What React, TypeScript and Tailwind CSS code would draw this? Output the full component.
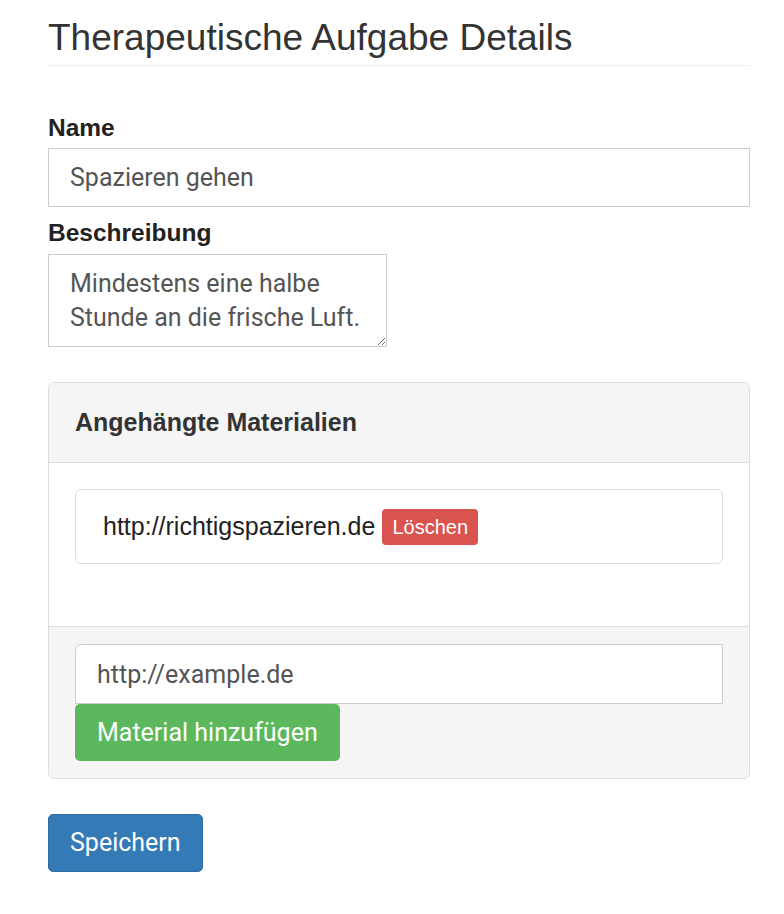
import { useState } from 'react';

const sans = "font-['Liberation_Sans',Arial,sans-serif]";
const roboto = "font-['Roboto',sans-serif]";

export default function App() {
  const [name, setName] = useState('Spazieren gehen');
  const [desc, setDesc] = useState('Mindestens eine halbe Stunde an die frische Luft.');
  const [url, setUrl] = useState('http://example.de');

  return (
    <div className={`${sans} text-[#333] bg-white min-h-screen`}>
      <div className="ml-[48px] w-[702px] pt-[17px]">
        <h1 className="text-[37px] leading-[41px] pb-[7px] border-b border-[#eee]">
          Therapeutische Aufgabe Details
        </h1>

        <div className="mt-[47px]">
          <label className="block font-bold text-[24.5px] leading-[30px] mb-[5px] text-[#222]">
            Name
          </label>
          <input
            value={name}
            onChange={(e) => setName(e.target.value)}
            className={`${roboto} block w-full h-[59px] px-[21px] text-[25px] text-[#555] border border-[#ccc] outline-none`}
          />
        </div>

        <div className="mt-[11px]">
          <label className="block font-bold text-[24.5px] leading-[30px] mb-[6px] text-[#222]">
            Beschreibung
          </label>
          <textarea
            value={desc}
            onChange={(e) => setDesc(e.target.value)}
            className={`${roboto} block w-[339px] h-[93px] px-[21px] py-[12px] text-[25px] leading-[34px] text-[#555] border border-[#ccc] outline-none`}
          />
        </div>

        <div className="mt-[35px] border border-[#ddd] rounded-[6px] overflow-hidden">
          <div className="h-[80px] bg-[#f5f5f5] border-b border-[#ddd] px-[26px] flex items-center">
            <h3 className="font-bold text-[25px]">Angehängte Materialien</h3>
          </div>
          <div className="px-[26px] pt-[26px] pb-[62px]">
            <div className="h-[75px] border border-[#ddd] rounded-[6px] px-[27px] flex items-center gap-[7px]">
              <span className="text-[25px] text-[#222]">http://richtigspazieren.de</span>
              <span className="bg-[#d9534f] text-white text-[20px] rounded-[4px] px-[10px] h-[36px] flex items-center">
                Löschen
              </span>
            </div>
          </div>
          <div className="bg-[#f5f5f5] border-t border-[#ddd] px-[26px] py-[17px]">
            <input
              value={url}
              onChange={(e) => setUrl(e.target.value)}
              className={`${roboto} block w-full h-[60px] px-[21px] text-[25px] text-[#555] bg-white border border-[#ccc] rounded-tl-[6px] outline-none`}
            />
            <button className={`${roboto} h-[57px] px-[22px] bg-[#5cb85c] text-white text-[25px] rounded-[5px]`}>
              Material hinzufügen
            </button>
          </div>
        </div>

        <button className={`${roboto} mt-[35px] h-[58px] px-[21px] bg-[#337ab7] border border-[#2e6da4] text-white text-[25px] rounded-[5px]`}>
          Speichern
        </button>
      </div>
    </div>
  );
}
